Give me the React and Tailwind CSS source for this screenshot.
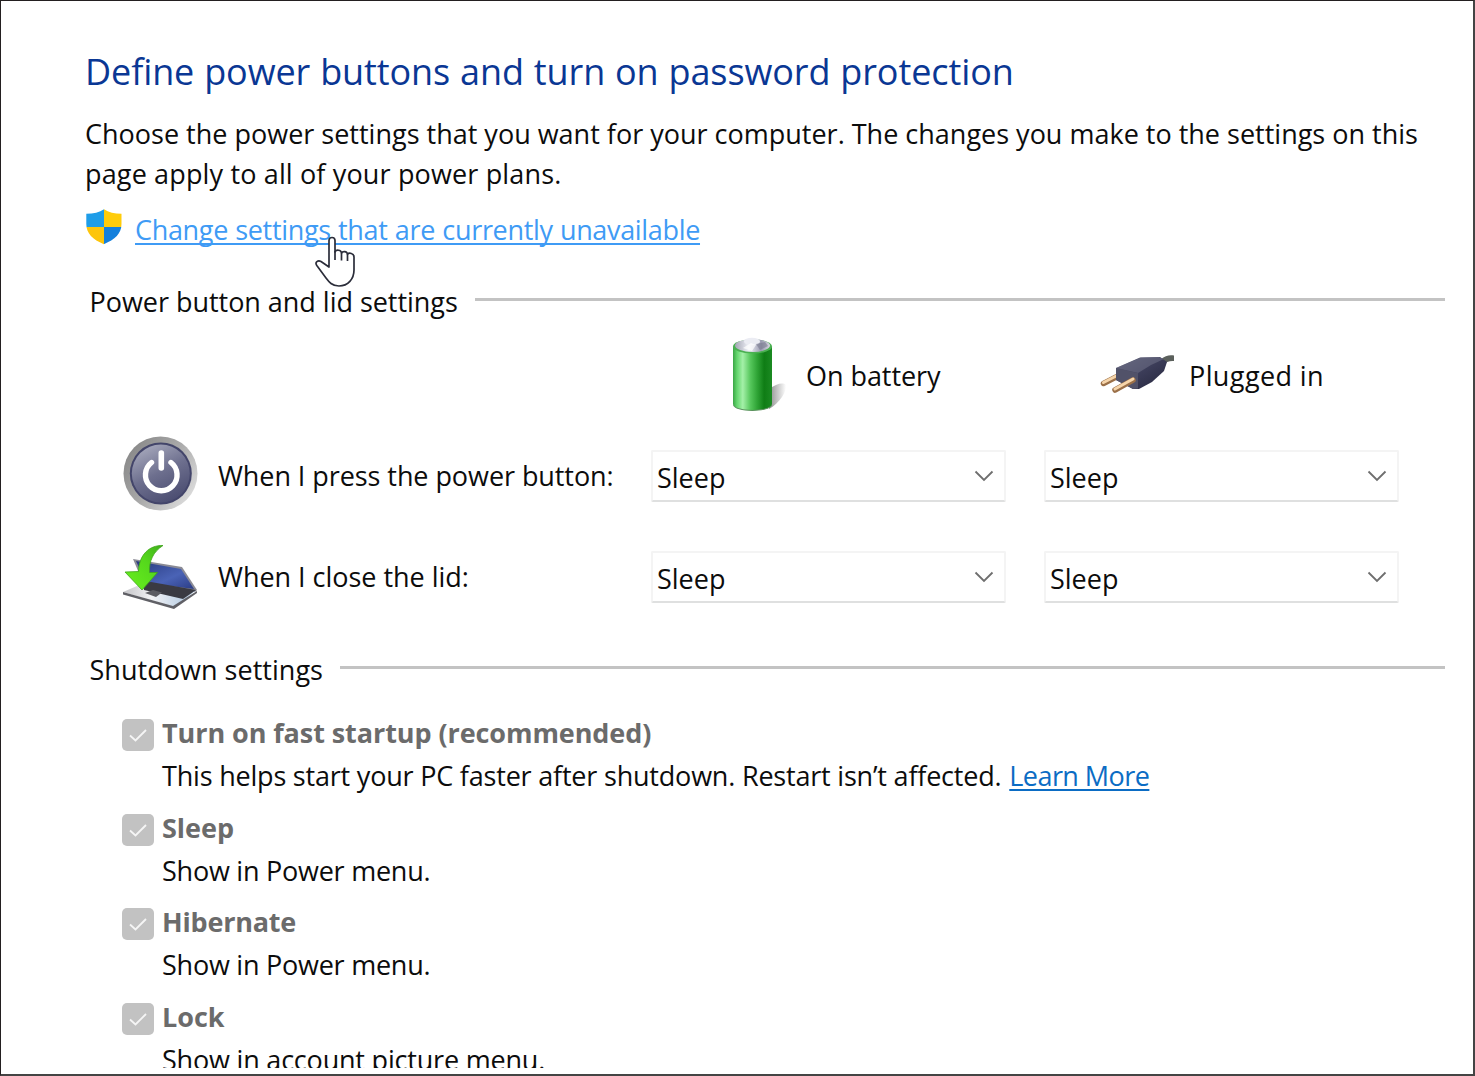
import React from 'react';

function ShieldIcon() {
  return (
    <svg className="-mt-px h-9 w-9 shrink-0" viewBox="0 0 36 36" aria-hidden="true">
      <defs>
        <clipPath id="shield">
          <path d="M18 .2C13.500 3.400 7.500 4.500.3 4.700V15c0 9.500 6.500 15.500 17.500 20.200C29 30.500 35.500 24.500 35.500 15V4.700C28.500 4.500 22.500 3.400 18 .2z" />
        </clipPath>
      </defs>
      <g clipPath="url(#shield)">
        <rect width="18" height="18" fill="#1f9de8" />
        <rect x="18" width="18" height="18" fill="#ffcc0a" />
        <rect y="18" width="18" height="18" fill="#fdc50c" />
        <rect x="18" y="18" width="18" height="18" fill="#1480dc" />
      </g>
    </svg>
  );
}

function HandCursor() {
  return (
    <svg className="absolute top-[26px] left-[229px] h-[52px] w-[42px]" viewBox="0 0 42 52" aria-hidden="true">
      <path
        d="M15 31V4.500C15 .5 21 .5 21 4.500V16c1-2.500 6-2.500 6.500 1 1-2 5.500-2 6 1.200C35 16.500 40 17 40 21v13c0 9-6 16-15 16-7 0-10-4-13-8L2.800 29.500C.5 26 4 24 7 25.500z"
        fill="#fff"
        stroke="#2b2d3a"
        strokeWidth="1.700"
        strokeLinejoin="round"
      />
      <path d="M21 15v9M27.500 17v7.500M33.500 18v7" stroke="#2b2d3a" strokeWidth="1.700" fill="none" />
    </svg>
  );
}

function BatteryIcon() {
  return (
    <svg className="h-[76px] w-[58px] shrink-0" viewBox="0 0 58 76" aria-hidden="true">
      <defs>
        <linearGradient id="cell" x1="0" x2="1">
          <stop offset="0" stopColor="#3aa545" />
          <stop offset=".1" stopColor="#63d56c" />
          <stop offset=".25" stopColor="#a4f0a8" />
          <stop offset=".45" stopColor="#55c65b" />
          <stop offset=".62" stopColor="#2fa436" />
          <stop offset=".8" stopColor="#0f7d15" />
          <stop offset="1" stopColor="#1b8a22" />
        </linearGradient>
        <linearGradient id="cap" x1="0" x2="1">
          <stop offset="0" stopColor="#a4a6b4" />
          <stop offset=".4" stopColor="#f0f1f8" />
          <stop offset=".75" stopColor="#9a9bb0" />
          <stop offset="1" stopColor="#d6d6e0" />
        </linearGradient>
        <linearGradient id="cellShadow" x1="0" x2="1">
          <stop offset="0" stopColor="#8f8f8f" />
          <stop offset="1" stopColor="#8f8f8f" stopOpacity="0" />
        </linearGradient>
      </defs>
      <path d="M38 52c7-5 14-7 17-4 1 6-6 18-17 24z" fill="url(#cellShadow)" />
      <path d="M2 10v57c0 8.500 39 8.500 39 0V10z" fill="url(#cell)" />
      <path d="M2 66.500c0 8.500 39 8.500 39 0v1c0 8.500-39 8.500-39 0z" fill="#5a915d" />
      <ellipse cx="21.500" cy="9.500" rx="19.500" ry="7" fill="#4bb052" />
      <ellipse cx="21.500" cy="8.500" rx="17.500" ry="6.500" fill="url(#cap)" />
      <ellipse cx="21" cy="4.500" rx="8" ry="3.800" fill="#ebecf3" />
      <path d="M25 7l9-2 3 4-8 4z" fill="#75768a" opacity=".55" />
      <path d="M12 11l8-5 5 2-4 6z" fill="#fff" opacity=".7" />
    </svg>
  );
}

function PlugIcon() {
  return (
    <svg className="h-[42px] w-[76px] shrink-0" viewBox="0 0 76 42" aria-hidden="true">
      <defs>
        <linearGradient id="plug" x1="0" y1="0" x2="1" y2="1">
          <stop offset="0" stopColor="#60627a" />
          <stop offset=".5" stopColor="#3b3c58" />
          <stop offset="1" stopColor="#25263c" />
        </linearGradient>
      </defs>
      <path d="M61 5c4-3.500 9-4.500 13-3.500V7c-4-.5-8 1-12 4z" fill="#5b605c" />
      <path d="M3.500 29.500L22 20" stroke="#9b7048" strokeWidth="5.500" strokeLinecap="round" />
      <path d="M3.500 28.500L22 19" stroke="#f6d5aa" strokeWidth="3" strokeLinecap="round" />
      <path d="M16 14L40 3.500 60 3l7 5-3 9-12 11-13 7-6 0-17-9z" fill="url(#plug)" />
      <path d="M16 14l22 5 13-8 13-6-5-2-18 .5z" fill="#6b6d84" opacity=".6" />
      <path d="M16 14l22 5v15.500l-5 .5-17-9z" fill="#515269" />
      <path d="M15 36L33 26" stroke="#9b7048" strokeWidth="5.500" strokeLinecap="round" />
      <path d="M15 35L33 25" stroke="#f6d5aa" strokeWidth="3" strokeLinecap="round" />
    </svg>
  );
}

function PowerIcon() {
  return (
    <svg className="-mt-[5px] h-[76px] w-[76px] shrink-0" viewBox="0 0 76 76" aria-hidden="true">
      <defs>
        <linearGradient id="ring" x1="0" y1=".1" x2="1" y2=".8">
          <stop offset="0" stopColor="#838383" />
          <stop offset=".5" stopColor="#a8a8a8" />
          <stop offset="1" stopColor="#e0e0e0" />
        </linearGradient>
        <linearGradient id="face" x1=".2" y1="0" x2=".7" y2="1">
          <stop offset="0" stopColor="#a9abbe" />
          <stop offset=".5" stopColor="#6d6f8e" />
          <stop offset="1" stopColor="#4a4c70" />
        </linearGradient>
      </defs>
      <circle cx="37.500" cy="37.500" r="37" fill="url(#ring)" />
      <circle cx="37.800" cy="37.500" r="31" fill="#43456a" />
      <circle cx="37.800" cy="37.500" r="29" fill="url(#face)" />
      <path d="M28.500 26.500a15.800 15.800 0 1 0 19.500 0" fill="none" stroke="#fff" strokeWidth="5.400" strokeLinecap="round" />
      <path d="M38.300 17v15" stroke="#fff" strokeWidth="5.600" strokeLinecap="round" />
    </svg>
  );
}

function LidIcon() {
  return (
    <svg className="h-[66px] w-[76px] shrink-0" viewBox="0 0 76 66" aria-hidden="true">
      <defs>
        <linearGradient id="screen" x1="0" y1="0" x2="1" y2="1">
          <stop offset="0" stopColor="#27397d" />
          <stop offset=".6" stopColor="#4a63b6" />
          <stop offset="1" stopColor="#2b3c85" />
        </linearGradient>
        <linearGradient id="base" x1="0" x2="1">
          <stop offset="0" stopColor="#c4c4c8" />
          <stop offset=".4" stopColor="#f2f2f4" />
          <stop offset="1" stopColor="#a9c4e0" />
        </linearGradient>
        <linearGradient id="arrow" x1="0" y1="1" x2="1" y2="0">
          <stop offset="0" stopColor="#6af01f" />
          <stop offset=".6" stopColor="#55d81c" />
          <stop offset="1" stopColor="#3fae1c" />
        </linearGradient>
      </defs>
      <path d="M10 15l49 8 15 23-2 2-51-7z" fill="#8b8b95" />
      <path d="M13 17l45 8 13 20-48-6z" fill="url(#screen)" />
      <path d="M0 48l21-9 51 8-20 16z" fill="url(#base)" />
      <path d="M20 39l8-1 45 8-13 9-39-9z" fill="#3a3a42" />
      <path d="M22 49l8-3 9 2.500-6 4.500z" fill="#5c5c62" />
      <path d="M0 48l50 14 24-15v2L51 65 0 50.500z" fill="#606066" />
      <path
        d="M40 1.500C26 1 16 11 15.500 27.500l-13.500 .5 17 18 15.500-17.500h-8C26 17 30 8 40 1.500z"
        fill="url(#arrow)"
        stroke="#3fa51c"
        strokeWidth=".8"
      />
    </svg>
  );
}

function Select({ value }) {
  return (
    <button
      type="button"
      className="flex h-[52px] w-[355px] items-center justify-between rounded-[2px] border-2 border-[#f4f4f4] border-b-[#dfe0e0] pr-[10px] pl-1 text-left"
    >
      <span className="pt-[3px]">{value}</span>
      <svg className="h-3 w-5" viewBox="0 0 20 12" fill="none" aria-hidden="true">
        <path d="M1.500 1.500l8.500 8.500 8.500-8.500" stroke="#6e6e6e" strokeWidth="1.800" />
      </svg>
    </button>
  );
}

function SectionTitle({ children, className }) {
  return (
    <div className="flex h-10 items-center">
      <h2 className={`pt-[2px] ${className}`}>{children}</h2>
      <div className="mb-[3px] h-[3px] flex-1 bg-[#c3c3c3]" />
    </div>
  );
}

const rows = [
  { label: 'When I press the power button:', icon: <PowerIcon />, tracking: 'tracking-[-0.07px]' },
  { label: 'When I close the lid:', icon: <LidIcon />, tracking: 'tracking-[-0.03px]' },
];

const options = [
  {
    title: 'Turn on fast startup (recommended)',
    titleTracking: 'tracking-[-0.08px]',
    text: 'This helps start your PC faster after shutdown. Restart isn’t affected.',
    textTracking: 'tracking-[-0.2px]',
    link: 'Learn More',
  },
  { title: 'Sleep', titleTracking: 'tracking-normal', text: 'Show in Power menu.', textTracking: 'tracking-[-0.24px]' },
  { title: 'Hibernate', titleTracking: 'tracking-[-0.2px]', text: 'Show in Power menu.', textTracking: 'tracking-[-0.24px]' },
  { title: 'Lock', titleTracking: 'tracking-normal', text: 'Show in account picture menu.', textTracking: 'tracking-[-0.2px]' },
];

export default function App() {
  return (
    <div className="h-[1076px] w-[1475px] overflow-hidden border-t border-r-2 border-b-2 border-l border-[#444] border-t-[#231f20] border-l-[#231f20] bg-white font-['Open_Sans',sans-serif] text-[27px] leading-10 whitespace-nowrap text-[#0c0c0c]">
      <main className="h-[1067px] overflow-hidden pt-[46px] pr-7 pl-[84px]">
        <h1 className="text-[36px] leading-[50px] tracking-[-0.1px] text-[#0a3794] [word-spacing:0.7px]">
          Define power buttons and turn on password protection
        </h1>
        <p className="mt-[17px]">
          Choose the power settings that you want for your computer. The changes you make to the settings on this
          <br />
          <span className="tracking-[0.15px]">page apply to all of your power plans.</span>
        </p>

        <div className="relative mt-4 flex h-10 items-start gap-[13px] pl-px">
          <ShieldIcon />
          <a
            href="#"
            className="tracking-[-0.33px] text-[#3f9bf5] underline decoration-2 underline-offset-[3px] [text-decoration-skip-ink:none] [word-spacing:0.6px]"
          >
            Change settings that are currently unavailable
          </a>
          <HandCursor />
        </div>

        <section className="mt-[31px] pl-1">
          <SectionTitle className="mr-[17px] ml-[0.5px] tracking-[-0.03px]">Power button and lid settings</SectionTitle>

          <div className="mt-4 flex h-[76px] items-center">
            <div className="ml-[642px] flex w-[369px] items-center">
              <BatteryIcon />
              <span className="ml-[17px] pt-px tracking-[-0.05px]">On battery</span>
            </div>
            <div className="flex items-center">
              <PlugIcon />
              <span className="ml-[13px] pt-px tracking-[0.4px]">Plugged in</span>
            </div>
          </div>

          <div className="mt-[37px] flex flex-col gap-[49px] pl-[34px]">
            {rows.map((row) => (
              <div key={row.label} className="flex h-[52px] items-center">
                <div className="flex w-[95px] shrink-0">{row.icon}</div>
                <span className={`w-[433px] shrink-0 pb-px ${row.tracking}`}>{row.label}</span>
                <div className="flex gap-[38px]">
                  <Select value="Sleep" />
                  <Select value="Sleep" />
                </div>
              </div>
            ))}
          </div>
        </section>

        <section className="mt-[46px] pl-1">
          <SectionTitle className="mr-[17px] ml-[0.5px] tracking-[0.03px]">Shutdown settings</SectionTitle>

          <div className="mt-6 flex flex-col gap-[11.7px] pl-[33px]">
            {options.map((option) => (
              <div key={option.title} className="flex gap-2">
                <div className="mt-[6px] flex size-8 shrink-0 items-center justify-center rounded-[5px] bg-[#c2c2c2]">
                  <svg className="h-[14px] w-[18px]" viewBox="0 0 18 14" fill="none" aria-hidden="true">
                    <path d="M1 7.500l5.500 5L17 2" stroke="#f5f5f5" strokeWidth="1.800" />
                  </svg>
                </div>
                <div>
                  <h3 className={`font-bold text-[#6b6b6b] ${option.titleTracking}`}>{option.title}</h3>
                  <p className={`mt-[3px] ${option.textTracking}`}>
                    {option.text}
                    {option.link && (
                      <>
                        {' '}
                        <a
                          href="#"
                          className="ml-px tracking-[-0.55px] text-[#0b6cc4] underline decoration-2 underline-offset-[3px]"
                        >
                          {option.link}
                        </a>
                      </>
                    )}
                  </p>
                </div>
              </div>
            ))}
          </div>
        </section>
      </main>
    </div>
  );
}
